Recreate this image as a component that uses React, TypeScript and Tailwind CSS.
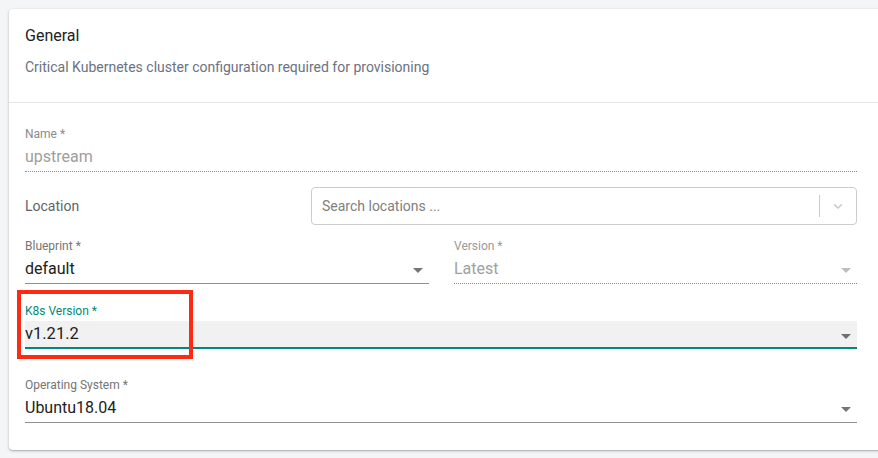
import React from "react";

const Arrow = ({ color = "rgba(0,0,0,0.54)" }: { color?: string }) => (
  <svg width="24" height="24" viewBox="0 0 24 24" className="shrink-0">
    <path d="M7 10l5 5 5-5z" fill={color} />
  </svg>
);

const Label = ({ children, className = "" }: { children: React.ReactNode; className?: string }) => (
  <div className={`h-4 text-[12px] leading-4 ${className}`}>{children}</div>
);

export default function App() {
  return (
    <div
      className="w-[878px] h-[458px] overflow-hidden bg-[#f4f5f7] pt-[9px] pl-[9px]"
      style={{ fontFamily: "Roboto, 'Liberation Sans', sans-serif" }}
    >
      <div className="w-[890px] h-[441px] bg-white rounded-[4px] shadow-[0_1px_3px_rgba(0,0,0,0.25),0_1px_1px_rgba(0,0,0,0.1)]">
        {/* Header */}
        <div className="pl-4 pt-[15px] pb-[25px] border-b border-[#e6e6e6]">
          <div className="text-[16px] leading-6 text-[#202124]">General</div>
          <div className="mt-[9px] text-[14px] leading-5 text-[#6b7280]">
            Critical Kubernetes cluster configuration required for provisioning
          </div>
        </div>

        {/* Form */}
        <div className="pl-4 w-[848px] pt-[23px]">
          {/* Name */}
          <div>
            <Label className="text-[#8a8a8a]">Name *</Label>
            <div className="h-[30px] flex items-center text-[16px] text-[#9e9e9e] border-b border-dotted border-[#8a8a8a]">
              upstream
            </div>
          </div>

          {/* Location */}
          <div className="mt-[15px] flex items-center h-[38px]">
            <div className="w-[286px] text-[14px] text-[#5f6368]">Location</div>
            <div className="flex-1 h-[38px] border border-[#cccccc] rounded-[4px] flex items-center">
              <div className="flex-1 pl-[10px] text-[14px] text-[#808080]">Search locations ...</div>
              <div className="w-px h-[22px] bg-[#cccccc]" />
              <div className="w-[36px] flex items-center justify-center">
                <svg width="14" height="14" viewBox="0 0 20 20">
                  <path
                    d="M4.516 7.548c0.436-0.446 1.043-0.481 1.576 0l3.908 3.747 3.908-3.747c0.533-0.481 1.141-0.446 1.574 0 0.436 0.445 0.408 1.197 0 1.615-0.406 0.418-4.695 4.502-4.695 4.502-0.217 0.223-0.502 0.335-0.787 0.335s-0.57-0.112-0.789-0.335c0 0-4.287-4.084-4.695-4.502s-0.436-1.170 0-1.615z"
                    fill="#cccccc"
                  />
                </svg>
              </div>
            </div>
          </div>

          {/* Blueprint / Version */}
          <div className="mt-[13px] flex gap-[25px]">
            <div className="w-[404px]">
              <Label className="text-[#757575]">Blueprint *</Label>
              <div className="h-[30px] flex items-center justify-between border-b border-[#8f8f8f]">
                <span className="text-[16px] text-[#212121]">default</span>
                <span className="mr-[-1px] mt-[3px]"><Arrow /></span>
              </div>
            </div>
            <div className="w-[403px]">
              <Label className="text-[#9a9a9a]">Version *</Label>
              <div className="h-[30px] flex items-center justify-between border-b border-dotted border-[#8a8a8a]">
                <span className="text-[16px] text-[#a0a0a0]">Latest</span>
                <span className="mr-[-1px] mt-[3px]"><Arrow color="rgba(0,0,0,0.26)" /></span>
              </div>
            </div>
          </div>

          {/* K8s Version */}
          <div className="relative mt-[19px]">
            <Label className="text-[#00897b]">K8s Version *</Label>
            <div className="mt-[2px] h-[28px] flex items-center justify-between bg-[#f1f1f1] border-b-2 border-[#00897b]">
              <span className="text-[16.5px] text-[#212121] pt-[1px]">v1.21.2</span>
              <span className="mr-[-1px] mt-[3px]"><Arrow /></span>
            </div>
            <div className="absolute left-[-8px] top-[-13px] w-[176px] h-[69px] border-4 border-[#ff2a14] pointer-events-none" />
          </div>

          {/* Operating System */}
          <div className="mt-[28px]">
            <Label className="text-[#757575]">Operating System *</Label>
            <div className="h-[30px] flex items-center justify-between border-b border-[#8f8f8f]">
              <span className="text-[16px] text-[#212121]">Ubuntu18.04</span>
              <span className="mr-[-1px] mt-[3px]"><Arrow /></span>
            </div>
          </div>
        </div>
      </div>
    </div>
  );
}
